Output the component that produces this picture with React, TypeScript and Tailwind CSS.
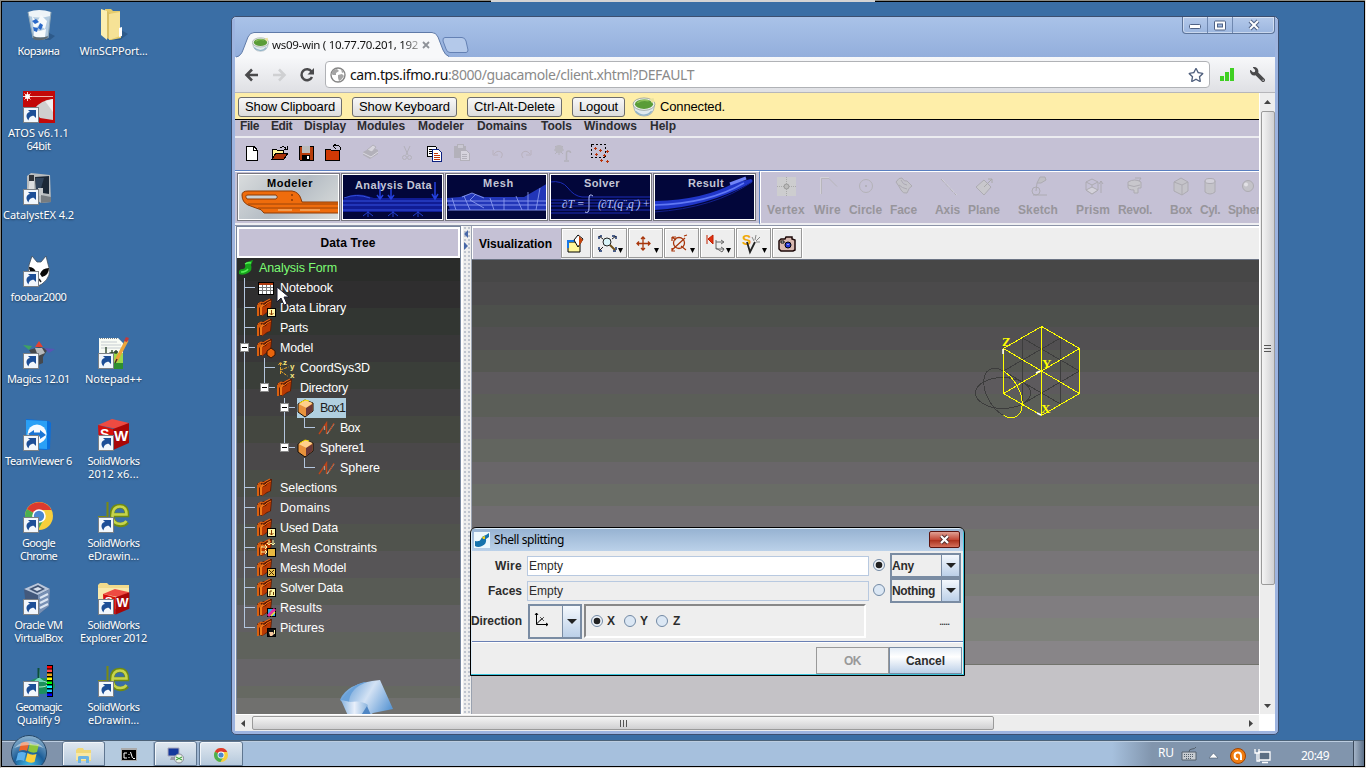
import { useLayoutEffect, useRef, useState, type ReactNode } from "react";
import { FaWrench, FaRegStar } from "react-icons/fa";

const tahoma = "font-['Noto_Sans',sans-serif]";
const arial = "font-['Liberation_Sans',sans-serif]";

/* Text run whose letter spacing is adjusted so that it fills `w` pixels. */
function Fit({ w, className = "", children }: { w: number; className?: string; children: string }) {
  const ref = useRef<HTMLSpanElement>(null);
  const [ls, setLs] = useState(0);
  useLayoutEffect(() => {
    if (ref.current) setLs((w - ref.current.getBoundingClientRect().width) / children.length);
  }, []);
  return (
    <span ref={ref} className={`inline-block shrink-0 whitespace-pre ${className}`} style={{ letterSpacing: ls }}>
      {children}
    </span>
  );
}

function Svg({ w, h = w, className = "", crisp = false, children }: { w: number; h?: number; className?: string; crisp?: boolean; children: ReactNode }) {
  return (
    <svg width={w} height={h} viewBox={`0 0 ${w} ${h}`} className={`block shrink-0 overflow-visible ${className}`} shapeRendering={crisp ? "crispEdges" : "auto"} fill="none">
      {children}
    </svg>
  );
}

/* ---------- desktop ---------- */

const Shortcut = () => (
  <g>
    <rect x=".5" y="16.500" width="15" height="15" fill="#f2f7fc" stroke="#7b8085" />
    <path d="M5.500 29.500c-3.500-4-2-8 1.500-8.500L5 19h8v8l-2.300-2.200C8 25 6 26 5.500 29.500z" fill="#1d4f97" />
  </g>
);

const bin = (
  <Svg w={32}>
    <path d="M26 24l6 3-5 4h-5z" fill="#1c3c62" fillOpacity=".4" />
    <path d="M5 3h23l-3 26q-7 3-15 0z" fill="#c9dcea" fillOpacity=".85" />
    <path d="M5 3q11-4 23 0l-1 4q-11 3-21 0z" fill="#eef4f8" />
    <path d="M9 7l5 6 4-7 6 6-2 8-6-4-5 5zM11 21l6 1 6-2-1 8H11z" fill="#f6fafc" />
    <path d="M9 12l4-2 3 3-2 1-2 1zM10 18l5 1-1 4-3-1zM17 14l3 2-2 5-3-2z" fill="#2a69c8" />
    <path d="M10 27q7 3 15 0v2q-8 4-15 1z" fill="#5d6a72" />
    <path d="M5 3l5 26M28 3l-3 26" stroke="#8ea6b6" />
  </Svg>
);

const folder = (
  <Svg w={32}>
    <path d="M23 21l7 4-8 6H12z" fill="#1c3c62" fillOpacity=".4" />
    <path d="M7 0h6l2 2h7v18l1 1v8l-10 2-6-3z" fill="#e6cc6c" />
    <path d="M3 0l6 2v29l-6-5z" fill="#fbeeb0" />
    <path d="M9 2l4 3v26l-4-2z" fill="#d9bf64" />
    <path d="M11 5l11-2v24l-11 4z" fill="#f6e296" />
    <path d="M21 19l3-1v9l-3 1z" fill="#fff" />
  </Svg>
);

const atos = (
  <Svg w={32}>
    <path d="M0 0h32v32H0z" fill="#c30808" />
    <path d="M11 18Q18 9 30 8v21l-13-2z" fill="#cfcfcf" />
    <path d="M22 10l8-2v13z" fill="#efefef" />
    <path d="M7 5.500h23" stroke="#eeb0a8" />
    <path d="M4.500 1v9M0 5.500h9M1.500 2.500l6 6m0-6l-6 6" stroke="#ffd9d0" />
    <circle cx="4.500" cy="5.500" r="2.500" fill="#fff" />
    <Shortcut />
  </Svg>
);

const catalyst = (
  <Svg w={32}>
    <path d="M4 3l4-3 19 2 1 27-10 1-14-9z" fill="#b8bcbe" />
    <path d="M7 2l4 0v20H5z" fill="#dedfdf" />
    <path d="M6 2h5v6H6z" fill="#30343a" />
    <path d="M12 4l14-1 0 18-13-2z" fill="#1c2836" />
    <path d="M13 5l8 0-3 10-5 1z" fill="#31445b" />
    <path d="M15 15l5 0v8h-5z" fill="#c5c8ca" />
    <path d="M18 22l10 2v5l-10 1z" fill="#777c80" />
    <Shortcut />
  </Svg>
);

const foobar = (
  <Svg w={32}>
    <path d="M9 1l5 6h4l5-6 2 8q5 12-6 20l-4 2Q3 25 6 10z" fill="#fff" stroke="#3d4c5c" strokeWidth=".8" />
    <path d="M17 19q2-6 9-6 0 7-7 9zM13 17q-2-5-7-5 0 5 5 8z" fill="#080808" />
    <path d="M16 24l2 3" stroke="#222" strokeWidth="1.500" />
    <Shortcut />
  </Svg>
);

const magics = (
  <Svg w={32}>
    <path d="M6 13l10-3 9 2-5 8v6l-5 2z" fill="#45484c" />
    <path d="M12 11l7 0 3 5-7 3z" fill="#b7babd" />
    <path d="M16 4l4 6h-8z" fill="#e04232" />
    <path d="M0 8l9 1-3 4z" fill="#3fa360" />
    <path d="M21 11l11 1-6 4z" fill="#5954b4" />
    <Shortcut />
  </Svg>
);

const notepad = (
  <Svg w={32}>
    <path d="M1 1h19l5 5v26H1z" fill="#f8fbf4" />
    <path d="M1 16h24v16H1z" fill="#9bd84a" />
    <path d="M1 26h24v6H1z" fill="#2f8f2f" />
    <path d="M3 5h16M3 8h20M3 11h20" stroke="#c5cbd0" />
    <path d="M2 1.500h18" stroke="#7a8288" strokeDasharray="1 1" />
    <path d="M8 10v8M14 13v6m-2.500-3h5M18 13v4m-2-2h4" stroke="#203a20" strokeWidth="1.300" />
    <path d="M29 3L18 24" stroke="#eba43a" strokeWidth="3.500" />
    <path d="M28 0l3 1-2 4-3-1z" fill="#c23a3a" />
    <path d="M19 22l-2 4" stroke="#473220" strokeWidth="1.500" />
    <Shortcut />
  </Svg>
);

const teamviewer = (
  <Svg w={32}>
    <path d="M3 0l23 2 2 2-1 26-4 1L3 29z" fill="#0a6fdc" />
    <path d="M3 1l21 1v28L3 29z" fill="#2aa0f6" />
    <circle cx="14" cy="15" r="9.500" fill="#f5faff" />
    <path d="M5 15l6-4v2.500h6V11l6 5-6 4v-2.500h-6V19z" fill="#1a74d4" />
    <Shortcut />
  </Svg>
);

const SwCube = () => (
  <g>
    <path d="M0 6l14-6 17 4-12 6z" fill="#ee4b42" />
    <path d="M0 6l15 4v21L1 26z" fill="#d6100c" />
    <path d="M15 10l16-6v20l-16 7z" fill="#a80707" />
    <text x="2" y="20" fontSize="14" fontWeight="900" fill="#fff" fontFamily="Liberation Sans">S</text>
    <text x="16" y="22" fontSize="15" fontWeight="900" fill="#fff" fontFamily="Liberation Sans">W</text>
  </g>
);

const solidworks = (
  <Svg w={32}>
    <SwCube />
    <Shortcut />
  </Svg>
);

const swExplorer = (
  <Svg w={32}>
    <path d="M0 2l2-2h7l2 2h20v24H0z" fill="#f1db8c" />
    <path d="M0 5h31v20H0z" fill="#f8e9ac" />
    <g transform="translate(5 6) scale(.85 .82)">
      <SwCube />
    </g>
    <Shortcut />
  </Svg>
);

const ChromeLogo = ({ s }: { s: number }) => (
  <svg width={s} height={s} viewBox="0 0 28 28" className="block shrink-0">
    <circle cx="14" cy="14" r="14" fill="#f7cf3c" />
    <path d="M14 14L1.900 7A14 14 0 0 0 13 28l6-11z" fill="#4caf4f" />
    <path d="M14 14L1.900 7A14 14 0 0 1 26.500 8H14z" fill="#dd3a2e" />
    <circle cx="14" cy="14" r="6.800" fill="#fff" />
    <circle cx="14" cy="14" r="5.200" fill="#4a86cf" />
  </svg>
);

const chrome = (
  <Svg w={32}>
    <g transform="translate(2 1)">
      <ChromeLogo s={28} />
    </g>
    <Shortcut />
  </Svg>
);

const edrawings = (
  <Svg w={32}>
    <path d="M9.500 1v16M0 16h8" stroke="#7a8a12" strokeWidth="2" />
    <path d="M15 14h14q0-9-7-9-8 0-8 9t8 10q5 0 7-3" stroke="#6f8a12" strokeWidth="4.600" />
    <path d="M15 13.500h13.500q0-8-6.500-8-7 0-7.500 8.500t8 9q4 0 6-3" stroke="#c6d44c" strokeWidth="2.600" />
    <Shortcut />
  </Svg>
);

const vbox = (
  <Svg w={32}>
    <path d="M1 6L15 0l12 6-1 17-11 9-12-8z" fill="#43597c" />
    <path d="M1 6L15 0l12 6-12 6z" fill="#b9c7dc" />
    <path d="M6 6l9-4 7 4-8 4z" fill="#415474" />
    <path d="M10 6l5-2 4 2-5 2z" fill="#d8e1ee" />
    <path d="M15 12l12-6-1 17-11 9z" fill="#7790b4" />
    <path d="M17 15l8-4M17 20l8-4M17 25l8-4" stroke="#dbe5f2" strokeWidth="2" />
    <Shortcut />
  </Svg>
);

const geomagic = (
  <Svg w={32}>
    <ellipse cx="18" cy="21" rx="14" ry="8" fill="#1c8f5c" />
    <ellipse cx="17" cy="19" rx="8" ry="3" stroke="#aef0c8" />
    <path d="M16 3l1 10 5 4H10l5-4z" fill="#6fd6b8" />
    <path d="M15.500 3v10" stroke="#0c4f38" strokeWidth="2" />
    <path d="M24 0h6v32h-6z" fill="#000" />
    <path d="M24 1h5v2.500h-5z" fill="#f00" />
    <path d="M24 4.500h5v2.500h-5z" fill="#ff4a4a" />
    <path d="M24 8.500h5v2.500h-5z" fill="#e8a418" />
    <path d="M24 12.500h5v2.500h-5z" fill="#ff0" />
    <path d="M24 16.500h5v2.500h-5z" fill="#0f0" />
    <path d="M24 20.500h5v2.500h-5z" fill="#0ff" />
    <path d="M24 24.500h5v2.500h-5z" fill="#18c8f8" />
    <path d="M24 28.500h5v2.500h-5z" fill="#00f" />
    <Shortcut />
  </Svg>
);

type Line = [string, number];
type DeskItem = { icon: ReactNode; lines: Line[] } | null;

const desktop: DeskItem[] = [
  { icon: bin, lines: [["Корзина", 42]] },
  { icon: folder, lines: [["WinSCPPort...", 68]] },
  { icon: atos, lines: [["ATOS v6.1.1", 61], ["64bit", 24]] },
  null,
  { icon: catalyst, lines: [["CatalystEX 4.2", 71]] },
  null,
  { icon: foobar, lines: [["foobar2000", 56]] },
  null,
  { icon: magics, lines: [["Magics 12.01", 63]] },
  { icon: notepad, lines: [["Notepad++", 57]] },
  { icon: teamviewer, lines: [["TeamViewer 6", 67]] },
  { icon: solidworks, lines: [["SolidWorks", 52], ["2012 x6...", 51]] },
  { icon: chrome, lines: [["Google", 33], ["Chrome", 37]] },
  { icon: edrawings, lines: [["SolidWorks", 52], ["eDrawin...", 51]] },
  { icon: vbox, lines: [["Oracle VM", 48], ["VirtualBox", 48]] },
  { icon: swExplorer, lines: [["SolidWorks", 52], ["Explorer 2012", 67]] },
  { icon: geomagic, lines: [["Geomagic", 46], ["Qualify 9", 43]] },
  { icon: edrawings, lines: [["SolidWorks", 52], ["eDrawin...", 51]] },
];

function Desktop() {
  return (
    <div className={`-ml-px grid w-[150px] auto-rows-[82px] grid-cols-2 text-[11px] leading-[13px] text-white ${tahoma}`}>
      {desktop.map((d, i) => (
        <div key={i} className="flex flex-col items-center">
          {d && (
            <>
              <div className="mb-[3px]">{d.icon}</div>
              {d.lines.map(([t, w]) => (
                <Fit key={t} w={w} className="[text-shadow:0_1px_2px_rgba(0,0,0,.45)]">{t}</Fit>
              ))}
            </>
          )}
        </div>
      ))}
    </div>
  );
}

/* ---------- browser chrome ---------- */

const Guac = ({ w, h }: { w: number; h: number }) => (
  <svg width={w} height={h} viewBox="0 0 24 21" className="block shrink-0">
    <path d="M1 9q1 11 11 11T23 9z" fill="#dfe9ee" stroke="#97a5ad" strokeWidth=".8" />
    <path d="M3 15q4 4 9 4t8-4" stroke="#8fb3c8" strokeWidth="1.500" fill="none" />
    <ellipse cx="12" cy="7.500" rx="11.500" ry="6.500" fill="#eef1f0" stroke="#8d9a90" strokeWidth=".8" />
    <ellipse cx="12" cy="7.500" rx="9.500" ry="5" fill="#5a9c38" />
    <path d="M5 6q5-4 12-2" stroke="#8cc15c" strokeWidth="1.500" fill="none" />
    <path d="M18 2l4-1 1 4-3 1z" fill="#e9e2a0" />
  </svg>
);

function TabStrip() {
  return (
    <div className="flex h-[40px] items-start bg-[linear-gradient(to_bottom,#a9c2e8,#93aedc)] pl-px">
      <div className="relative mt-[15px] flex h-[25px] w-[213px] items-center pl-[16px]">
        <svg width="213" height="26" viewBox="0 0 213 26" className="absolute left-0 top-0" fill="none">
          <path d="M0 26Q5 24 7 18L12 5Q14 .5 18 .5H196Q200 .5 202 5L207 18Q209 23 213 25V26z" fill="#f7f8fa" />
          <path d="M0 25Q5 24 7 18L12 5Q14 .5 18 .5H196Q200 .5 202 5L207 18Q209 23 213 24.500" stroke="#5f7aa8" />
        </svg>
        <div className="relative flex items-center">
          <Guac w={17} h={15} />
          <Fit w={146} className={`ml-[3px] bg-[linear-gradient(to_right,#111_90%,#aaa)] bg-clip-text text-[11.5px] leading-[16px] text-transparent ${tahoma}`}>ws09-win ( 10.77.70.201, 192</Fit>
          <Svg w={8} className="ml-[4px]">
            <path d="M1 1l6 6M7 1L1 7" stroke="#8e9299" strokeWidth="1.800" />
          </Svg>
        </div>
      </div>
      <Svg w={26} h={16} className="ml-[-7px] mt-[20px]">
        <path d="M3 .5H20Q23 .5 24 4L26 13Q26 15.500 24 15.500H8Q5 15.500 4 12L1 4Q.5 .5 3 .5z" fill="#b4c9ea" stroke="#6481b4" />
      </Svg>
      <div className="ml-auto flex h-[17px] w-[93px] rounded-b-[4px] border border-t-0 border-[#5d7499] bg-[linear-gradient(to_bottom,#b4c9ea,#9cb6df)] shadow-[inset_0_0_0_1px_rgba(255,255,255,.45)]">
        <div className="flex w-[25px] items-center justify-center border-r border-[#6f88b0]">
          <Svg w={12} h={8}><rect x=".5" y="3.500" width="11" height="4" rx="1" fill="#fff" stroke="#4f6285" /></Svg>
        </div>
        <div className="flex w-[25px] items-center justify-center border-r border-[#6f88b0]">
          <Svg w={12} h={11}><rect x=".5" y="1" width="11" height="9" rx="1" fill="#fff" stroke="#4f6285" /><rect x="3.500" y="4" width="5" height="3" fill="#9cb6df" stroke="#4f6285" /></Svg>
        </div>
        <div className="flex flex-1 items-center justify-center">
          <Svg w={12} h={10}><path d="M2 1l8 8M10 1L2 9" stroke="#4f6285" strokeWidth="4" /><path d="M2 1l8 8M10 1L2 9" stroke="#fff" strokeWidth="2" /></Svg>
        </div>
      </div>
    </div>
  );
}

function AddressBar() {
  return (
    <div className="flex h-[36px] items-center border-b border-[#b6b6ba] bg-[linear-gradient(to_bottom,#f7f8fa,#dfe0e4)] pl-[9px]">
      <Svg w={15} h={14}>
        <path d="M14 7H3M8 1.500L2.500 7 8 12.500" stroke="#4a4a4c" strokeWidth="2.600" />
      </Svg>
      <Svg w={15} h={14} className="ml-[13px]">
        <path d="M1 7h11M7 1.500L12.500 7 7 12.500" stroke="#cfd0d2" strokeWidth="2.600" />
      </Svg>
      <Svg w={16} h={15} className="ml-[12px]">
        <path d="M12.500 4.500A5.500 5.500 0 1 0 13 10" stroke="#4a4a4c" strokeWidth="2.500" />
        <path d="M15 1v6.500H8.500z" fill="#4a4a4c" />
      </Svg>
      <div className="ml-[10px] flex h-[27px] w-[885px] items-center rounded-[4px] border border-[#b0b2b6] bg-white pl-[4px]">
        <Svg w={16}>
          <circle cx="8" cy="8" r="7" fill="#fff" stroke="#858585" strokeWidth="1.400" />
          <path d="M3 3l4-1 2 2-3 2v2H3L1.500 7zM8 8l4-1 2 2-3 4-2 1-1-3zM11 2l3 3-2 1z" fill="#a5a5a5" />
        </Svg>
        <div className={`ml-[4px] flex text-[14px] leading-[18px] ${tahoma}`}>
          <Fit w={98} className="text-[#111]">cam.tps.ifmo.ru</Fit>
          <Fit w={246} className="text-[#8a8a8a]">:8000/guacamole/client.xhtml?DEFAULT</Fit>
        </div>
        <FaRegStar className="ml-auto mr-[5px] text-[16px] text-[#4f5f7d]" />
      </div>
      <Svg w={16} h={13} className="ml-[9px]" crisp>
        <rect x="1" y="8" width="4" height="5" rx="1" fill="#3fd022" />
        <rect x="6" y="4" width="4" height="9" fill="#3fd022" />
        <rect x="11" y="0" width="4" height="13" fill="#3fd022" />
      </Svg>
      <FaWrench className="ml-[15px] -scale-x-100 text-[15px] text-[#4a4a4c]" />
    </div>
  );
}

function GuacBar() {
  const btn = "flex h-[20px] items-center justify-center rounded-[3px] border border-[#6d6d6d] bg-[linear-gradient(to_bottom,#f8f8f8,#dcdcdc)]";
  return (
    <div className={`flex h-[27px] shrink-0 items-center border-b border-black bg-[#feeea9] pl-[3px] pt-px text-[13px] leading-[16px] text-black ${arial}`}>
      <div className={`${btn} w-[104px]`}><Fit w={90}>Show Clipboard</Fit></div>
      <div className={`${btn} ml-[10px] w-[105px]`}><Fit w={91}>Show Keyboard</Fit></div>
      <div className={`${btn} ml-[10px] w-[95px]`}><Fit w={81}>Ctrl-Alt-Delete</Fit></div>
      <div className={`${btn} ml-[10px] w-[53px]`}><Fit w={39}>Logout</Fit></div>
      <div className="ml-[7px]"><Guac w={24} h={20} /></div>
      <Fit w={65} className="ml-[4px]">Connected.</Fit>
    </div>
  );
}

/* ---------- remote application ---------- */

const menus: [string, number, string][] = [
  ["File", 19, "w-[31px]"],
  ["Edit", 21, "w-[33px]"],
  ["Display", 42, "w-[53px]"],
  ["Modules", 48, "w-[61px]"],
  ["Modeler", 46, "w-[59px]"],
  ["Domains", 50, "w-[64px]"],
  ["Tools", 31, "w-[43px]"],
  ["Windows", 53, "w-[66px]"],
  ["Help", 26, "w-[40px]"],
];

function MenuBar() {
  return (
    <div className="flex h-[16px] shrink-0 pl-[5px] text-[12px] font-bold leading-[13px] text-[#2c2c30]">
      {menus.map(([t, w, c]) => (
        <div key={t} className={c}><Fit w={w}>{t}</Fit></div>
      ))}
    </div>
  );
}

function FileTools() {
  const g = "#b3b1ba";
  return (
    <div className="flex h-[34px] shrink-0 items-center border-t-2 border-[#ececf0] pl-[10px] pb-[3px]">
      <Svg w={13} h={16} crisp><path d="M1 1h8l3 4v10H1z" fill="#fff" stroke="#000" /><path d="M8 1v4h4" stroke="#000" /></Svg>
      <Svg w={18} h={16} className="ml-[13px]" crisp>
        <path d="M1 14V4h4l1 1h6v3" fill="#fff79a" stroke="#000" />
        <path d="M1 14l4-6h12l-4 6z" fill="#a83208" stroke="#000" />
        <path d="M9 3q4-3 6 1M13 4h3V1" stroke="#000" />
      </Svg>
      <Svg w={16} className="ml-[9px]" crisp>
        <path d="M1 1h14v14H2l-1-1z" fill="#b73c0c" stroke="#000" /><path d="M4 1h8v7H4z" fill="#bbb" /><path d="M4 10h8v5H4z" fill="#000" /><path d="M9 11h2v3H9z" fill="#fff" />
      </Svg>
      <Svg w={18} h={17} className="ml-[10px]" crisp>
        <path d="M1 16V6l1-1h4l1 1h8v10z" fill="#cf3905" stroke="#000" /><path d="M16 6V3q-1-2-5-1M12 0L9 2l3 3" stroke="#000" />
      </Svg>
      <Svg w={17} className="ml-[20px]"><path d="M1 8l9-5 6 3v4l-8 5-7-4z" fill={g} /><path d="M5 6l6-5 3 2-4 5z" fill="#d7d5dd" stroke={g} /><path d="M1 9l8 4 7-5" stroke="#dcdae2" /></Svg>
      <Svg w={10} h={16} className="ml-[23px]"><path d="M2 1l4 9M8 1L4 10" stroke={g} /><circle cx="2.500" cy="12.500" r="2" stroke={g} /><circle cx="7.500" cy="12.500" r="2" stroke={g} /></Svg>
      <Svg w={16} className="ml-[14px]" crisp>
        <path d="M1 1h8l1 1v9H1z" fill="#fff" stroke="#000" /><path d="M3 4h5M3 6h5M3 8h5" stroke="#000" /><path d="M6 4h6l3 3v9H6z" fill="#fff" stroke="#0d2080" /><path d="M8 8h4M8 10h6M8 12h6M8 14h6" stroke="#c0330a" />
      </Svg>
      <Svg w={17} className="ml-[11px]" crisp><path d="M1 2h12v12H1z" fill={g} /><path d="M4 0h6v4H4z" fill="#c9c7d2" stroke={g} /><path d="M7 6h6l3 3v7H7z" fill="#d6d4dd" stroke={g} /><path d="M9 10h5M9 12h5M9 14h5" stroke={g} /></Svg>
      <Svg w={14} h={10} className="ml-[21px]"><path d="M2 2v5h5M3 6q4-5 8-1 1 2-1 5" stroke="#b9b2be" /></Svg>
      <Svg w={14} h={10} className="ml-[14px]"><path d="M12 2v5H7M11 6Q7 1 3 5q-1 2 1 5" stroke="#b9b2be" /></Svg>
      <Svg w={18} h={18} className="ml-[20px]"><path d="M6 1v10M1 6h10M2 2l8 8M10 2l-8 8" stroke={g} /><circle cx="6" cy="5" r="4" fill="#b8b6bf" /><path d="M13.500 16V9q0-2 2-2t2 2M11 17h5" stroke={g} strokeWidth="1.500" /></Svg>
      <Svg w={19} h={18} className="ml-[20px]" crisp>
        <rect x=".5" y=".5" width="14" height="13" stroke="#000" strokeDasharray="2 2" />
        <path d="M3 4h3M4.500 2.500v3M8 6h3M9.500 4.500v3M4 10h3M5.500 8.500v3M15 7h3M16.500 5.500v3M9 16h3M10.500 14.500v3M15 17h3M16.500 15.500v3M12 11h3M13.500 9.500v3" stroke="#b8320a" />
      </Svg>
    </div>
  );
}

const modules: { t: string; w: number; c: string; pt: string; art: ReactNode }[] = [
  {
    t: "Modeler", w: 46, c: "bg-[linear-gradient(135deg,#d9dcdd,#b4bcc4_50%,#dcdedc)] pl-[3px] text-black", pt: "pt-[2px]",
    art: (
      <g>
        <path d="M4 21q0-4 6-4h44q7 1 9 8l1 3h38v11H26q-2-4-8-5l-8-3q-6-3-6-10z" fill="#ef6c0c" stroke="#8c3a04" />
        <path d="M9 25q-3-4 1-4h28q3 2 0 4z" fill="#ccd0d2" stroke="#8c3a04" /><path d="M10 30h92M20 34h82" stroke="#9c4408" /><path d="M40 36h14M62 36h20" stroke="#f8c890" /><circle cx="54" cy="21" r="1" fill="#8c3a04" /><circle cx="54" cy="26" r="1" fill="#8c3a04" />
      </g>
    ),
  },
  {
    t: "Analysis Data", w: 77, c: "bg-[#02063a] pl-[2px] text-[#c4c6d6]", pt: "pt-[4px]",
    art: (
      <g>
        <path d="M0 27q8-8 22-6l10 3h70v14H0z" fill="#101c94" /><path d="M0 27h102M0 31h102M0 36h102M2 24q12-5 26 0" stroke="#3450e0" />
        <path d="M38 9v16m-3-4l3 4 3-4M49 15v10m-3-4l3 4 3-4M93 8v17m-3-5l3 5 3-5" stroke="#2440e0" strokeWidth="1.500" />
        <path d="M26 37v6m-5-1l5-4 5 4M51 37v6m-5-1l5-4 5 4M76 37v6m-5-1l5-4 5 4" stroke="#2440d0" />
      </g>
    ),
  },
  {
    t: "Mesh", w: 31, c: "bg-[#02063a] pl-[4px] text-[#c4c6d6]", pt: "pt-[2px]",
    art: (
      <g>
        <path d="M0 24l14-1 12-4 12 4h40l24-14v27H4z" fill="#2236b8" /><path d="M0 27h102M0 31h102M2 36h98" stroke="#8090f0" />
        <path d="M6 24l4 12M18 22l6 14M30 20l-6 6 14 8M44 24l4 12M58 24v12M70 22l6 14M82 18v18M94 14l-4 22M16 23l10-4 12 5" stroke="#94a4f4" strokeWidth=".8" />
      </g>
    ),
  },
  {
    t: "Solver", w: 36, c: "bg-[#02063a] pl-[3px] text-[#c4c6d6]", pt: "pt-[2px]",
    art: (
      <g>
        <path d="M0 8q12-2 18 6t14 9h70M0 26h102M0 29h102M0 32h102M0 36h102M0 39h80" stroke="#1c2cb8" />
        <text x="12" y="34" fontSize="11.500" fontStyle="italic" fontFamily="Liberation Serif" fill="#b4c0fc">∂T =</text>
        <text x="48" y="34" fontSize="11.500" fontStyle="italic" fontFamily="Liberation Serif" fill="#b4c0fc" textLength="52">(∂T.(q¨,q¨) +</text>
        <path d="M43 22q-4-3-4 2v10q0 6-4 4" stroke="#b4c0fc" />
      </g>
    ),
  },
  {
    t: "Result", w: 36, c: "bg-[#02063a] pl-[3px] text-[#c4c6d6]", pt: "pt-[2px]",
    art: (
      <g>
        <path d="M0 27q50-1 80-18l17-4q3 2 0 4Q50 34 0 36z" fill="#2036c8" /><path d="M0 31Q54 30 90 9" stroke="#6078f4" strokeWidth="1.500" /><path d="M76 10l16-6" stroke="#7084f8" strokeWidth="3" />
        <path d="M0 38Q60 34 98 8" stroke="#14208c" />
      </g>
    ),
  },
];

const G = "#adabb2";
const L = "#d3d1da";
const shapes: { t: string; w: number; c: string; art: ReactNode }[] = [
  { t: "Vertex", w: 38, c: "w-[38px]", art: <><rect x="1" y="0" width="19" height="19" fill="#cdcdcf" /><path d="M1 9.500h19M10.500 0v19" stroke="#aaa" strokeDasharray="1 1" /><circle cx="10.500" cy="9.500" r="2.500" fill="#bbb" stroke="#999" /></> },
  { t: "Wire", w: 27, c: "ml-[9px] w-[27px]", art: <><path d="M3.500 17V1.500H11l8 8" stroke="#b8b6bc" /><path d="M2.500 17V.5H11" stroke={L} /></> },
  { t: "Circle", w: 33, c: "ml-[8px] w-[33px]", art: <><circle cx="10" cy="9" r="6.500" stroke="#b4b2b8" /><circle cx="10" cy="9" r="1" fill={G} /></> },
  { t: "Face", w: 27, c: "ml-[8px] w-[27px]", art: <path d="M2 5q3-5 6-4 2 4 5 3l5 5q-3 1-5 7-4 1-6-3-2-4-5-8zM7 3q2 5 6 5M5 8q3 3 8 4" fill="#c4c3c9" stroke={G} /> },
  { t: "Axis", w: 25, c: "ml-[18px] w-[25px]", art: <><path d="M3 2l15 16" stroke="#b0aeb4" strokeDasharray="5 1.500" /><path d="M4 2l15 16" stroke={L} strokeDasharray="5 1.500" /></> },
  { t: "Plane", w: 32, c: "ml-[8px] w-[32px]", art: <><path d="M2 10l8-7 7 7-7 8z" fill="#c8c7cc" stroke={G} /><path d="M10 10l8-8m-4 0h4v4" stroke="#aaa" /></> },
  { t: "Sketch", w: 40, c: "ml-[18px] w-[40px]", art: <><circle cx="8" cy="14" r="4" stroke={G} /><path d="M9 6l3-6h5l1 3-5 3zM8 14l1-8M5 18h14" fill="#c0bfc5" stroke={G} /></> },
  { t: "Prism", w: 34, c: "ml-[18px] w-[34px]", art: <><path d="M3 5l6-3 6 3v8l-6 4-6-4zM3 5l6 3 6-3M9 8v9M18 16V4m-2 3l2-3 2 3" stroke={G} /><path d="M3 13l6-3 6 3-6 4z" fill={L} stroke={G} /></> },
  { t: "Revol.", w: 34, c: "ml-[8px] w-[34px]", art: <><path d="M3 5q7-4 13 0v6h-3v5H9v-3q-6 0-6-3z" fill="#c8c7cc" stroke={G} /><path d="M3 8q6 3 12 0M10 1h6l-2 3" stroke={G} /></> },
  { t: "Box", w: 22, c: "ml-[18px] w-[22px]", art: <><path d="M3 5l7-4 7 4v9l-6 4-8-4z" fill="#c4c3c9" stroke={G} /><path d="M3 5l8 3 6-3M11 8v10" stroke={G} /></> },
  { t: "Cyl.", w: 20, c: "ml-[8px] w-[20px]", art: <><path d="M5 4v11q5 4 10 0V4z" fill="#c4c3c9" stroke={G} /><ellipse cx="10" cy="4" rx="5" ry="2.500" fill={L} stroke={G} /></> },
  { t: "Spher", w: 32, c: "ml-[8px] w-[32px]", art: <><circle cx="14" cy="9" r="5.500" fill="#c4c3c9" stroke={G} /><circle cx="12" cy="7.500" r="2" fill="#e2e1e6" /></> },
];

function ModuleRow() {
  return (
    <div className="flex h-[56px] shrink-0 overflow-hidden border-b border-t border-b-[#8c94a8] border-t-[#5a7fc0]">
      <div className="flex w-[524px] gap-px border-b-2 border-t border-b-[#efeff2] border-t-white pl-[2px] pt-px">
        {modules.map((m) => (
          <div key={m.t} className="h-[48px] w-[103px] shrink-0 border border-[#76767e] p-px shadow-[inset_0_0_0_1px_#fff]">
            <div className={`relative flex h-full justify-center overflow-hidden ${m.c} ${m.pt}`}>
              <svg width="102" height="45" viewBox="0 0 102 45" className="absolute -left-px -top-px" fill="none">{m.art}</svg>
              <Fit w={m.w} className="relative h-[13px] text-[11px] font-bold leading-[13px]">{m.t}</Fit>
            </div>
          </div>
        ))}
      </div>
      <div className="flex flex-1 overflow-hidden border-b-2 border-l border-t border-b-[#efeff2] border-l-[#5a7fc0] border-t-white pl-[7px] pt-[5px] shadow-[inset_1px_0_0_#fff]">
        {shapes.map((s) => (
          <div key={s.t} className={`flex shrink-0 flex-col items-center ${s.c}`}>
            <Svg w={20} h={20}>{s.art}</Svg>
            <Fit w={s.w} className="mt-[6px] text-[12px] font-bold leading-[14px] text-[#97959b]">{s.t}</Fit>
          </div>
        ))}
      </div>
    </div>
  );
}

/* ---------- data tree ---------- */

const Folder = () => (
  <g>
    <path d="M0 5l3-2 2 0 2-1 2 0 4-2h2l-1 12-2 1-2 1-5 3-2-1-2 1H0z" fill="#5e1c03" />
    <path d="M0 6l4-2v3L2 9v8H0z" fill="#d86010" />
    <path d="M3 8l2-3 2 1-2 3v7H3z" fill="#ee7a18" />
    <path d="M5 8l4-1 1-2 4-2-1 9-3 1-5 4z" fill="#b83a04" />
    <path d="M1 5l3-2 2 1 3-2 4-2M5 7l3-1 2-2 4-2" stroke="#f86c14" />
  </g>
);
const Badge = ({ children, bg = "#fff6a4" }: { children?: ReactNode; bg?: string }) => (
  <g>
    <rect x="10.500" y="9.500" width="8" height="8" fill={bg} stroke="#000" />
    {children}
  </g>
);
const Cube = () => (
  <g>
    <path d="M1 5l7-4 8 3v8l-8 6-7-5z" fill="#e8923c" stroke="#140c04" />
    <path d="M1.500 5l7-4 7 3-6 5z" fill="#ffd08c" />
    <path d="M9 9l6.500-4v7L9 17z" fill="#6b3838" />
    <path d="M3 4l5-3 4 1" stroke="#ffe600" />
  </g>
);
const Curve = () => (
  <>
    <path d="M2 15L9.500 4v11" stroke="#c04418" strokeWidth="1.400" />
    <path d="M7.500 7v4M10 15l7-10" stroke="#a09a92" strokeWidth="1.300" />
    <path d="M12 13l5-9" stroke="#c04418" />
  </>
);

const icons: Record<string, ReactNode> = {
  form: <><path d="M2 15q-1-5 4-5 3-1 2-4 0-3 5-4l3-1-2 5q2 5-3 8-5 3-9 1z" fill="#17a51c" /><path d="M4 13q5 0 7-3M8 5q3-2 6-1" stroke="#55f055" strokeWidth="1.500" /></>,
  notebook: <><rect x="1.500" y="3.500" width="15" height="12" fill="#fff" stroke="#000" /><path d="M2 4h14v2H2z" fill="#b03c10" /><path d="M2 8.500h14M2 11.500h14M5.500 6v9M9.500 6v9M13.500 6v9" stroke="#777" /></>,
  folder: <Folder />,
  down: <><Folder /><Badge><path d="M14.500 11v5m-2-2l2 2 2-2" stroke="#8a3a00" /></Badge></>,
  model: <><Folder /><path d="M10 12l4-3 4 3v4l-4 3-4-3z" fill="#e8640c" stroke="#3a1400" /></>,
  axes: <><path d="M3.500 15V3m-2 3l2-3 2 3M3.500 11l8-3M3.500 12l7 5" stroke="#e8a72c" strokeDasharray="3 1" /><text x="6" y="6" fontSize="8" fontWeight="bold" fill="#f8e880">z</text><text x="13" y="10" fontSize="8" fontWeight="bold" fill="#f8e880">y</text><text x="13" y="19" fontSize="8" fontWeight="bold" fill="#f8e880">x</text></>,
  cube: <Cube />,
  curve: <Curve />,
  constraints: <><Folder /><Badge bg="#e8b840" /><path d="M4 8h6m-2-2l2 2-2 2M4 13h6m-2-2l2 2-2 2M12 1v5m-2-2l2 2 2-2M16 1v5m-2-2l2 2 2-2" stroke="#fff6a4" /></>,
  mesh: <><Folder /><Badge bg="#e8c050"><path d="M12 11l5 5M17 11l-5 5" stroke="#4a2a00" /></Badge></>,
  solver: <><Folder /><Badge><path d="M12 16h1v-4h2M16.500 13v3" stroke="#6a3a00" /></Badge></>,
  results: <><Folder /><Badge bg="#38a8e8"><path d="M11 17l7-7" stroke="#e830a0" strokeWidth="3" /><path d="M14 17l4-4" stroke="#f8e030" strokeWidth="1.500" /></Badge></>,
  pictures: <><Folder /><Badge bg="#111"><path d="M12 13h4l1 2-2 2h-2z" fill="#f6c9a0" /><path d="M17.500 11v4" stroke="#f8f0a0" /></Badge></>,
};

/* Guides: t = tee, l = last, v = pass-through, _ = blank; capitals carry a collapse box. */
const tree: [string, string, string, number][] = [
  ["", "form", "Analysis Form", 78],
  ["t", "notebook", "Notebook", 53],
  ["t", "down", "Data Library", 66],
  ["t", "folder", "Parts", 28],
  ["T", "model", "Model", 33],
  ["vt", "axes", "CoordSys3D", 70],
  ["vL", "folder", "Directory", 48],
  ["v_T", "cube", "Box1", 25],
  ["v_vl", "curve", "Box", 20],
  ["v_L", "cube", "Sphere1", 45],
  ["v__l", "curve", "Sphere", 40],
  ["t", "folder", "Selections", 57],
  ["t", "folder", "Domains", 50],
  ["t", "down", "Used Data", 58],
  ["t", "constraints", "Mesh Constraints", 97],
  ["t", "mesh", "Mesh Model", 66],
  ["t", "solver", "Solver Data", 63],
  ["t", "results", "Results", 42],
  ["l", "pictures", "Pictures", 44],
];

function Guides({ g }: { g: string }) {
  if (!g) return null;
  return (
    <Svg w={g.length * 20} h={20} crisp>
      {g.split("").map((k, i) => {
        const x = i * 20 + 7.5;
        const lower = k.toLowerCase();
        return (
          <g key={i} stroke="#b4c6de">
            {lower !== "_" && <path d={`M${x} 0V${lower === "l" ? 10 : 20}`} />}
            {(lower === "t" || lower === "l") && <path d={`M${x} 9.500h10`} />}
            {(k === "T" || k === "L") && (
              <>
                <rect x={x - 4} y="5.500" width="8" height="8" fill="#fff" stroke="#888" />
                <path d={`M${x - 2.5} 9.500h5`} stroke="#000" />
              </>
            )}
          </g>
        );
      })}
    </Svg>
  );
}

function DataTree() {
  return (
    <div className="flex w-[225px] shrink-0 flex-col border-l border-r border-t border-[#76849c] bg-[#c5c1d5]">
      <div className="flex h-[31px] shrink-0 items-center justify-center border-2 border-white pr-px pt-px text-[12px] font-bold text-black"><Fit w={55}>Data Tree</Fit></div>
      <div className="relative flex-1 overflow-hidden bg-[linear-gradient(to_bottom,#2a2c2a_0_23px,#2f2e2f_23px_50px,#323632_50px_77px,#383738_77px_104px,#3a3e39_104px_131px,#414041_131px_158px,#444740_158px_185px,#4a4849_185px_212px,#4a4d47_212px_239px,#504e50_239px_266px,#50534d_266px_293px,#575557_293px_320px,#585b55_320px_347px,#615f62_347px_374px,#5f625c_374px_401px,#676568_401px_428px,#666962_428px_440px,#70706e_440px)]">
        {tree.map(([g, icon, t, w]) => (
          <div key={t + g} className="flex h-[20px] items-center text-[12.5px] leading-[16px] text-white">
            <Guides g={g} />
            <div className={`flex h-[20px] items-center ${t === "Box1" ? "bg-[#b0cfe0] pr-px text-[#1c1c1c]" : ""}`}>
              <Svg w={20} h={18}>{icons[icon]}</Svg>
              <Fit w={w} className={g ? "ml-[3px]" : "ml-[2px] text-[#7dfc74]"}>{t}</Fit>
            </div>
          </div>
        ))}
        <svg width="56" height="38" viewBox="0 0 56 38" className="absolute left-[103px] top-[421px]" fill="none">
          <defs>
            <linearGradient id="sheet" x1="0" x2="1" y1=".3" y2=".7"><stop stopColor="#5c98d4" /><stop offset=".5" stopColor="#d3e2f4" /><stop offset="1" stopColor="#5b97d4" /></linearGradient>
            <linearGradient id="fold"><stop stopColor="#88b4e0" /><stop offset=".5" stopColor="#e8effa" /><stop offset="1" stopColor="#8ab4de" /></linearGradient>
          </defs>
          <path d="M0 21Q6 4 40 1l13 29-20 4-4 3H20z" fill="url(#sheet)" />
          <path d="M1 21Q14 3 27 3 10 9 9 23z" fill="#6aa2da" />
          <path d="M1 21l8 18h14l5-13q-6-5-18-3z" fill="url(#fold)" />
          <path d="M20 38l7-11 4 9z" fill="#4f86c4" />
        </svg>
        <svg width="13" height="20" viewBox="0 0 13 20" className="absolute left-[39px] top-[28px]">
          <path d="M1 1v15l4-4 3 7 3-1-3-7h5z" fill="#fff" stroke="#1a1c30" />
        </svg>
      </div>
    </div>
  );
}

/* ---------- visualization ---------- */

const Drop = () => <path d="M25 19h5l-2.500 5z" fill="#000" />;
const vizTools: { c: string; art: ReactNode }[] = [
  { c: "w-[30px]", art: <><path d="M6 13h12v10H6z" fill="#fff79a" stroke="#000" /><path d="M6 11v8M6 12h10" stroke="#1878e8" strokeWidth="2" /><path d="M16 6l5 4-5 8-4-7z" fill="#fff" stroke="#000" /><path d="M17 7l4 4-4 6z" fill="#c8460c" /></> },
  { c: "ml-px w-[35px]", art: <><path d="M6 10V7h3M19 7h4v3M23 18v4h-4M9 22H6v-4" stroke="#14306c" strokeWidth="1.500" strokeDasharray="3 1" /><circle cx="14" cy="13" r="4" fill="#d8f4f8" stroke="#222" /><path d="M17 16l5 5" stroke="#705018" strokeWidth="2" /><path d="M6 7l4 3M23 7l-4 3M6 22l4-4" stroke="#222" /><Drop /></> },
  { c: "ml-px w-[35px]", art: <><path d="M14 8v13M8 14.500h13M12 10l2-2 2 2M12 19l2 2 2-2M10 12.500l-2 2 2 2M19 12.500l2 2-2 2" stroke="#a8350a" strokeWidth="1.300" /><Drop /></> },
  { c: "ml-px w-[35px]", art: <><circle cx="14" cy="14" r="5.500" stroke="#a8350a" strokeWidth="1.300" /><path d="M7 8h4M7 8v4M7 8l4 3M20 9l-13 12M21 21l-5-4M19 7l3-1M7 19v3h3" stroke="#a8350a" strokeWidth="1.200" /><Drop /></> },
  { c: "ml-px w-[35px]", art: <><path d="M6 6v9M12 6L7 10l5 5z" fill="#e03010" stroke="#c02000" /><path d="M15 11v9h8M15 13h7M15 19l6 4M20 11l3 2-3 2M20 18l3 2-2 3" stroke="#666" /><Drop /></> },
  { c: "ml-px w-[35px]", art: <><text x="5" y="16" fontSize="14" fontWeight="bold" fill="#f0a808" fontFamily="Liberation Sans">S</text><path d="M10 13l3 10 5-10" stroke="#222" strokeWidth="1.800" /><path d="M15 8l2 4M19 6l-1 5M23 8l-4 4M23 13h-4" stroke="#888" /><Drop /></> },
  { c: "ml-px w-[30px]", art: <><path d="M6 12l2-2h4l1-2h6v2l3 1v10l-2 1H8l-2-2z" fill="#d8b8b0" stroke="#1c0808" strokeWidth="1.500" /><path d="M8 12h3v2H8z" fill="#fff" stroke="#000" /><circle cx="15" cy="16" r="3" fill="#2838d8" stroke="#000" /><path d="M15 15v1" stroke="#fff" /></> },
];

function Scene() {
  return (
    <Svg w={120} h={110} className="absolute left-[493px] top-[50px]">
      <g transform="translate(-965 -310)">
        <g stroke="#3d3d3d" shapeRendering="crispEdges">
          <ellipse cx="1003" cy="393" rx="27.500" ry="15.500" />
          <ellipse cx="1003" cy="393" rx="27" ry="15.800" transform="rotate(60 1003 393)" />
          <path d="M1022.500 338v66M1060.500 338v66M1003.500 371l57-33M1003.500 371l57 33M1079.500 371l-57-33M1079.500 371l-57 33" />
        </g>
        <clipPath id="arc"><rect x="1003.500" y="360" width="30" height="70" /></clipPath>
        <g clipPath="url(#arc)"><ellipse cx="1003" cy="393" rx="27" ry="15.800" transform="rotate(60 1003 393)" stroke="#ff0" shapeRendering="crispEdges" /></g>
        <path d="M1041.500 326.500l38 22v45l-38 22-38-22v-45zM1041.500 326.500v89M1003.500 348.500l76 45M1079.500 348.500l-76 45" stroke="#ff0" shapeRendering="crispEdges" />
        <path d="M1003 349v5M1036 373l4-2M1037 413l4 2" stroke="#fff" strokeWidth="1.500" />
        <g fill="#ff0" fontFamily="Liberation Serif" fontSize="13" fontWeight="bold">
          <text x="1002" y="346">Z</text>
          <text x="1042" y="368">Y</text>
          <text x="1041" y="413">X</text>
        </g>
      </g>
    </Svg>
  );
}

function Visualization() {
  return (
    <div className="flex min-w-0 flex-1 flex-col">
      <div className="flex h-[34px] shrink-0 border-b border-t-2 border-b-[#6c7484] border-t-white bg-[#eee]">
        <div className="flex w-[89px] shrink-0 items-center border-l border-white bg-[#c5c1d5] pl-[6px] text-[12px] font-bold text-black"><Fit w={73}>Visualization</Fit></div>
        {vizTools.map((v, i) => (
          <div key={i} className={`h-[30px] shrink-0 border border-[#999] bg-[#eee] shadow-[inset_1px_1px_0_#fff,1px_0_0_#fff] ${v.c}`}>
            <Svg w={28}>{v.art}</Svg>
          </div>
        ))}
      </div>
      <div className="relative h-[405px] shrink-0 border-b border-[#72736c] bg-[linear-gradient(to_bottom,#474747_0_22px,#4b4a4b_22px_45px,#4d504c_45px_67px,#525052_67px_90px,#555752_90px_112px,#5d5a5d_112px_134px,#5b5e58_134px_157px,#625f62_157px_179px,#62655f_179px_202px,#696669_202px_224px,#696c66_224px_246px,#706d70_246px_269px,#70736d_269px_291px,#787578_291px_314px,#787b75_314px_336px,#807d80_336px_358px,#7e817b_358px_381px,#888588_381px)]">
        <Scene />
      </div>
      <div className="flex-1 bg-[#c4c2c6]" />
    </div>
  );
}

/* ---------- dialog ---------- */

const Radio = ({ on = false }: { on?: boolean }) => (
  <Svg w={13}>
    <circle cx="6" cy="6" r="5.500" fill={on ? "#eef3f9" : "#dbe7f4"} stroke="#7289a4" />
    {on && <circle cx="6" cy="6" r="3.300" fill="#222" />}
  </Svg>
);

const Arrow = () => (
  <div className="flex w-[18px] items-center justify-center border-l border-[#7a8ca3] bg-[linear-gradient(to_bottom,#f4f8fd,#bcd0e8)]">
    <Svg w={10} h={5}><path d="M0 0h10L5 5z" fill="#222" /></Svg>
  </div>
);

function Dialog() {
  return (
    <div className={`absolute left-[470px] top-[527px] flex h-[149px] w-[495px] flex-col overflow-hidden rounded-t-[6px] border border-black bg-[#eee] text-[12px] leading-[16px] text-[#2c2c2c] shadow-[inset_-1px_-1px_0_#3cc4dc,inset_1px_1px_0_#dcecf8] ${arial}`}>
      <div className="m-px flex h-[22px] shrink-0 items-center bg-[linear-gradient(to_bottom,#97b3d2,#bbd1e9)] pl-[2px]">
        <Svg w={16}><path d="M0 0h16v16H0z" fill="#eef8fc" /><path d="M1 14V9q5 1 6-2t5-4l3-2v4l-3 2q1 5-4 7-4 2-7 0z" fill="#1773ac" /><path d="M8 5l3-1v3H9z" fill="#f4d018" /></Svg>
        <Fit w={70} className={`ml-[4px] text-[12px] leading-[16px] text-black ${tahoma}`}>Shell splitting</Fit>
        <div className="mb-px ml-auto mr-[3px] flex h-[17px] w-[31px] items-center justify-center rounded-[2px] border border-[#5b1410] bg-[linear-gradient(to_bottom,#e0a094,#c44a38_50%,#a82c18_51%,#d4705c)]">
          <Svg w={11} h={9}><path d="M2 1l7 7M9 1L2 8" stroke="#543030" strokeWidth="4" /><path d="M2 1l7 7M9 1L2 8" stroke="#fff" strokeWidth="2.200" /></Svg>
        </div>
      </div>
      <div className="mt-px flex h-[25px] shrink-0 items-center">
        <div className="w-[51px] text-right font-bold"><Fit w={27}>Wire</Fit></div>
        <div className="ml-[5px] flex h-[20px] w-[342px] items-center border border-[#b8c9e0] bg-white pl-px"><Fit w={34}>Empty</Fit></div>
        <div className="ml-[4px]"><Radio on /></div>
        <div className="ml-[4px] flex h-[25px] w-[71px] border-2 border-[#7a8ca3]">
          <div className="flex flex-1 items-center font-bold"><Fit w={22}>Any</Fit></div>
          <Arrow />
        </div>
      </div>
      <div className="flex h-[25px] shrink-0 items-center">
        <div className="w-[51px] text-right font-bold"><Fit w={34}>Faces</Fit></div>
        <div className="ml-[5px] flex h-[20px] w-[342px] items-center border border-[#b8c9e0] pl-px"><Fit w={34}>Empty</Fit></div>
        <div className="ml-[4px]"><Radio /></div>
        <div className="ml-[4px] flex h-[25px] w-[71px] border-2 border-[#7a8ca3]">
          <div className="flex flex-1 items-center font-bold"><Fit w={43}>Nothing</Fit></div>
          <Arrow />
        </div>
      </div>
      <div className="flex h-[36px] shrink-0 items-center font-bold">
        <div className="w-[52px]"><Fit w={51}>Direction</Fit></div>
        <div className="ml-[5px] flex h-[35px] w-[54px] border-2 border-[#7a8ca3]">
          <div className="flex flex-1 pl-[4px] pt-[7px]"><Svg w={15} h={15}><path d="M2.500 0v11.500H14M1 2l1.500-2L4 2M12 10l2 1.500-2 1.500M2.500 11l6-6" stroke="#000" /><path d="M6 4l4 4M10 4L6 8" stroke="#333" strokeWidth=".8" /></Svg></div>
          <Arrow />
        </div>
        <div className="ml-[2px] flex h-[34px] w-[282px] items-center border-2 border-b-white border-l-[#888] border-r-white border-t-[#888] pl-[5px]">
          <Radio on />
          <div className="ml-[3px] w-[17px]"><Fit w={8}>X</Fit></div>
          <Radio />
          <div className="ml-[3px] w-[16px]"><Fit w={8}>Y</Fit></div>
          <Radio />
          <div className="ml-[4px]"><Fit w={7}>Z</Fit></div>
        </div>
        <Fit w={10} className="ml-[73px] font-normal">.....</Fit>
      </div>
      <div className="mx-px mt-[2px] h-[2px] shrink-0 border-b border-t border-b-white border-t-[#6a80b4]" />
      <div className="mt-[4px] flex h-[27px] shrink-0 justify-end pr-[2px] font-bold">
        <div className="flex w-[73px] items-center justify-center border border-[#999] text-[#999]"><Fit w={17}>OK</Fit></div>
        <div className="flex w-[73px] items-center justify-center border border-[#7a8ca3] bg-[linear-gradient(to_bottom,#e4edf7,#fff_35%,#bcd0e8)]"><Fit w={39}>Cancel</Fit></div>
      </div>
    </div>
  );
}

/* ---------- browser window ---------- */

function Browser() {
  return (
    <div className="absolute left-[231px] top-[16px] flex h-[719px] w-[1048px] flex-col overflow-hidden rounded-[5px] border border-[#3c4f70] bg-[#9db4e0] px-[3px] pb-[3px] shadow-[inset_0_1px_0_#cfdcf2]">
      <TabStrip />
      <AddressBar />
      <div className="flex min-h-0 flex-1">
        <div className={`flex w-[1024px] shrink-0 flex-col bg-[#c5c1d5] ${arial}`}>
          <GuacBar />
          <MenuBar />
          <FileTools />
          <ModuleRow />
          <div className="flex min-h-0 flex-1">
            <div className="w-px shrink-0 bg-[#eee]" />
            <DataTree />
            <div className="w-[11px] shrink-0 border-l-2 border-r border-l-white border-r-[#9aa2b0] bg-[#eee] bg-[radial-gradient(#b0b8c6_0.600px,transparent_1px)] [background-size:4px_4px]">
              <Svg w={7} h={26} className="mt-[2px]"><path d="M5 2v8L1 6zM1 14v8l4-4z" fill="#4868a8" /></Svg>
            </div>
            <Visualization />
          </div>
        </div>
        <div className="flex flex-1 flex-col items-center border-l border-white bg-[#ededed]">
          <Svg w={7} h={4} className="my-[7px]"><path d="M0 4h7L3.500 0z" fill="#444" /></Svg>
          <div className="flex h-[474px] w-[14px] items-center justify-center rounded-[2px] border border-[#9a9a9a] bg-[linear-gradient(to_right,#f4f4f4,#d0d0d2)]">
            <Svg w={7} h={8} crisp><path d="M0 1h7M0 4h7M0 7h7" stroke="#555" /></Svg>
          </div>
          <Svg w={7} h={4} className="mb-[6px] mt-auto"><path d="M0 0h7L3.500 4z" fill="#444" /></Svg>
        </div>
      </div>
      <div className="flex h-[17px] shrink-0 border-t border-white">
        <div className="flex w-[1024px] items-center bg-[#ededed]">
          <Svg w={4} h={7} className="mx-[6px]"><path d="M4 0v7L0 3.500z" fill="#444" /></Svg>
          <div className="ml-px flex h-[14px] w-[742px] items-center justify-center rounded-[2px] border border-[#9a9a9a] bg-[linear-gradient(to_bottom,#f4f4f4,#d0d0d2)]">
            <Svg w={8} h={7} crisp><path d="M1 0v7M4 0v7M7 0v7" stroke="#555" /></Svg>
          </div>
          <Svg w={4} h={7} className="ml-auto mr-[6px]"><path d="M0 0v7L4 3.500z" fill="#444" /></Svg>
        </div>
        <div className="flex-1 bg-white" />
      </div>
    </div>
  );
}

/* ---------- taskbar ---------- */

function Taskbar() {
  const lit = "border border-[#5f7690] bg-[linear-gradient(to_bottom,#e0e8f0,#b6c9dc)] shadow-[inset_1px_1px_0_#f2f6fa]";
  return (
    <div className={`flex h-[26px] items-stretch border-t border-[#4c6278] bg-[linear-gradient(to_right,#8093ab_0_60px,#a6c0dd_240px,#a6c0dd_1110px,#8195ad_1150px)] text-white shadow-[inset_0_1px_0_#bccde0] ${tahoma}`}>
      <div className="relative w-[60px]">
        <svg width="38" height="31" viewBox="0 0 38 31" className="absolute -top-[7px] left-[8px]">
          <defs><radialGradient id="orb" cx=".5" cy=".9" r=".9"><stop stopColor="#3fc4f0" /><stop offset=".5" stopColor="#1d5e98" /><stop offset="1" stopColor="#8fb4d0" /></radialGradient></defs>
          <circle cx="19" cy="19" r="17.500" fill="url(#orb)" stroke="#244668" />
          <path d="M11 9q4-2 8 0l-2 8q-4-2-8 0z" fill="#e8642c" /><path d="M20 9q4 3 9 1l-2 8q-4 2-9-1z" fill="#8cc63c" />
          <path d="M8 19q4-2 8 0l-2 8q-4-2-8 0z" fill="#5cb0ec" /><path d="M17.500 19q4 3 9 1l-2 8q-4 2-9-1z" fill="#fcd03c" />
          <path d="M4 14q15-14 30 0Q19 8 4 14z" fill="#fff" fillOpacity=".45" />
        </svg>
      </div>
      <div className={`flex w-[43px] items-center justify-center rounded-t-[3px] pt-[3px] ${lit}`}>
        <Svg w={17} h={15}><path d="M1 2l2-2h5l1 2h7v11H1z" fill="#f0d878" /><path d="M1 5h15v7H1z" fill="#f8e8a4" /><path d="M3 15V9q0-1 2-1h7q2 0 2 1v6h-3v-4H6v4z" fill="#6cb4e4" /></Svg>
      </div>
      <div className="flex w-[48px] items-center justify-center bg-[#b4cadf] pt-[2px]">
        <div className="flex h-[13px] w-[16px] items-center justify-center border border-t-2 border-[#aaa] bg-black"><Svg w={12} h={7}><path d="M4 1H1v5h3M6 2v1M6 5v1M7.500 0l2 6M10 6.500h2" stroke="#fff" /></Svg></div>
      </div>
      <div className={`ml-px flex w-[43px] items-center justify-center rounded-t-[3px] pt-[3px] ${lit}`}>
        <Svg w={16} h={15}><path d="M0 0h11v8H0z" fill="#14389c" stroke="#aab" /><path d="M3 9h6l1 3H2z" fill="#99a" /><circle cx="11" cy="10.500" r="4.500" fill="#e8f0e4" stroke="#889" /><path d="M8 9l3 1.500L8 12M14 9l-3 1.500 3 1.500" stroke="#2c9c2c" /></Svg>
      </div>
      <div className={`ml-[2px] flex w-[44px] items-center justify-center rounded-t-[3px] pt-[3px] ${lit}`}><ChromeLogo s={14} /></div>
      <div className="ml-auto flex items-center">
        <Fit w={16} className="mt-[-2px] text-[12px] leading-[14px]">RU</Fit>
        <Svg w={16} h={13} className="ml-[7px]"><path d="M1 5h14v8H1z" fill="#c8cdd2" stroke="#54606c" /><path d="M3 7.500h10M3 9.500h10M5 11.500h6" stroke="#54606c" strokeDasharray="1 1" /><path d="M8 5q0-3 3-3t4-2" stroke="#54606c" /></Svg>
        <Svg w={9} h={5} className="ml-[12px] mt-[4px]"><path d="M0 5h9L4.500 0z" fill="#fff" stroke="#4c5c70" strokeWidth=".6" /></Svg>
        <Svg w={16} className="ml-[12px] mt-[4px]"><circle cx="8" cy="8" r="7.500" fill="#f07c10" stroke="#a04404" /><path d="M11 12V7.500A3.200 3.200 0 1 0 8 11" stroke="#fff" strokeWidth="2" /></Svg>
        <Svg w={17} h={15} className="ml-[8px] mt-[3px]"><path d="M5 4h11v8H5z" fill="#5c6e82" stroke="#fff" strokeWidth="1.300" /><path d="M8 14.500h6M1 1v4h4V1M3 5v8h3" stroke="#fff" strokeWidth="1.300" /></Svg>
        <Fit w={28} className="ml-[30px] mt-[4px] text-[12px] leading-[14px]">20:49</Fit>
        <div className="ml-[24px] h-full w-[11px] border-l border-[#3c4a5c] bg-[linear-gradient(to_right,#a4b4c8,#5c7088)]" />
      </div>
    </div>
  );
}

export default function App() {
  return (
    <div className="flex h-[768px] w-[1366px] flex-col overflow-hidden border-x border-b border-b-[#e4e0dc] border-l-[#8a8a84] border-r-[#e4e0dc] bg-[#3a6ea5]">
      <div className="flex h-[2px] shrink-0">
        <div className="w-[490px] border-b border-black bg-[#8a8a84]" />
        <div className="w-[384px] bg-[#d4d4d4]" />
        <div className="flex-1 border-b border-black bg-[#8a8a84]" />
      </div>
      <div className="flex min-h-0 flex-1 flex-col border-x border-b border-black">
        <div className="min-h-0 flex-1 overflow-hidden pt-[7px]">
          <Desktop />
        </div>
        <Taskbar />
      </div>
      <Browser />
      <Dialog />
    </div>
  );
}
